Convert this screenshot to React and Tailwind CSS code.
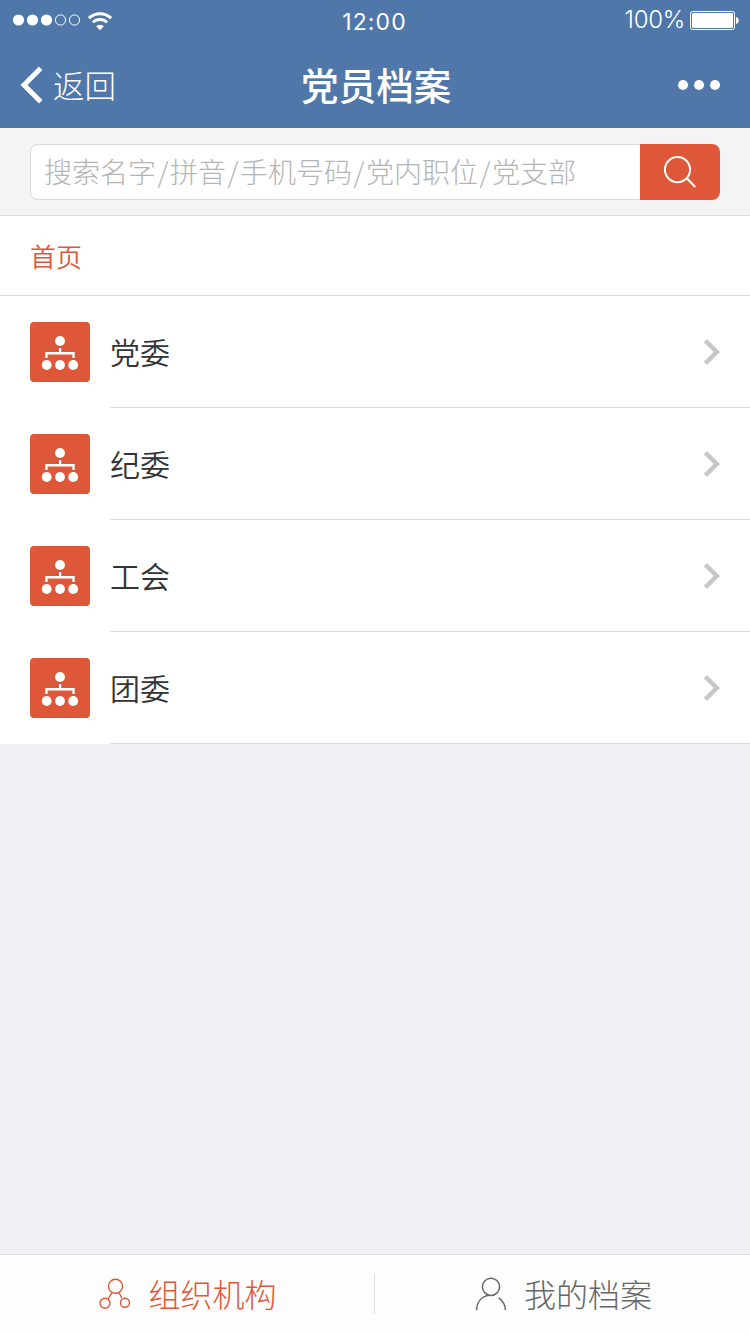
const CJK = "font-['Noto_Sans_CJK_SC',sans-serif]";

const departments = ['党委', '纪委', '工会', '团委'];
const searchFields = ['搜索名字', '拼音', '手机号码', '党内职位', '党支部'];

function StatusBar() {
  return (
    <div className="flex h-10 items-center justify-between pr-[11px] pl-3 font-['Inter','Liberation_Sans',sans-serif]">
      <div className="flex flex-1 items-center">
        <svg width="70" height="14" viewBox="0 0 70 14">
          <g fill="#fff">
            <circle cx="6.5" cy="7" r="5.6" />
            <circle cx="20.5" cy="7" r="5.6" />
            <circle cx="34.5" cy="7" r="5.6" />
          </g>
          <g fill="none" stroke="#fff" strokeWidth="1">
            <circle cx="48.5" cy="7" r="5.1" />
            <circle cx="62.5" cy="7" r="5.1" />
          </g>
        </svg>
        <svg width="26" height="20" viewBox="0 0 26 20" className="ml-[5px] mt-[1px]" fill="none" stroke="#fff">
          <path d="M1.9 7.2a16 16 0 0 1 22.2 0" strokeWidth="3" />
          <path d="M5.9 11.3a10.4 10.4 0 0 1 14.2 0" strokeWidth="2.8" />
          <path d="M13 19.2L9.1 15.3a5.6 5.6 0 0 1 7.8 0z" fill="#fff" stroke="none" />
        </svg>
      </div>
      <div className="mt-[3px] mr-[2px] text-[23px] leading-6 font-normal tracking-[1.1px]">12:00</div>
      <div className="flex flex-1 items-center justify-end">
        <span className="mr-[5px] text-[24px] leading-6 font-light tracking-[-0.3px]">100%</span>
        <svg width="49" height="20" viewBox="0 0 49 20">
          <rect x="0.5" y="1.5" width="44" height="18" rx="2" fill="none" stroke="#fff" />
          <rect x="2" y="3" width="41" height="15" rx="1" fill="#fff" />
          <path d="M46 7a3.6 3.6 0 0 1 0 7z" fill="#fff" />
        </svg>
      </div>
    </div>
  );
}

function NavBar() {
  return (
    <div className="flex h-[88px] items-center pr-[30px] pl-5">
      <div className="flex w-[280px] items-center">
        <svg width="24" height="38" viewBox="0 0 24 38" className="mt-[2px]" fill="none" stroke="#fff" strokeWidth="5">
          <path d="M20.7 2.3L4 19l16.7 16.7" />
        </svg>
        <span className="ml-[9px] text-[31.5px] leading-10 font-light">返回</span>
      </div>
      <h1 className="ml-[1px] text-[37.6px] leading-10 font-medium">党员档案</h1>
      <div className="flex flex-1 justify-end gap-[6px] pt-[2px]">
        <i className="size-[10px] rounded-full bg-white" />
        <i className="size-[10px] rounded-full bg-white" />
        <i className="size-[10px] rounded-full bg-white" />
      </div>
    </div>
  );
}

function SearchBar() {
  return (
    <div className="flex h-[88px] border-b border-[#dcdcdd] bg-[#f4f4f4] px-[30px] py-4">
      <div className="flex h-14 flex-1 items-center rounded-l-[8px] border border-r-0 border-[#dadbdd] bg-white pb-[2px] pl-[13px] text-[28px] leading-10 font-light whitespace-nowrap text-[#b5b5b6]">
        {searchFields.map((field, i) => (
          <span key={field} className="flex">
            {i > 0 && <span className="w-[14px] text-center">/</span>}
            {field}
          </span>
        ))}
      </div>
      <button className="flex h-14 w-20 items-center justify-center rounded-r-[8px] bg-[#de5738]">
        <svg width="34" height="34" viewBox="0 0 34 34" fill="none" stroke="#fff" strokeWidth="2">
          <circle cx="14.5" cy="14.6" r="12.6" />
          <path d="M23.6 23L32.2 32" />
        </svg>
      </button>
    </div>
  );
}

function OrgBadge() {
  return (
    <span className="flex size-[60px] items-center justify-center rounded-[4px] bg-[#de5738]">
      <svg width="60" height="60" viewBox="0 0 60 60" fill="#fff">
        <circle cx="30" cy="19" r="5" />
        <path d="M29 26h2.2v4h13.5v6h-2.3v-3.6H17.6V36h-2.3v-6H29z" />
        <circle cx="16.7" cy="43" r="4.9" />
        <circle cx="30" cy="43" r="4.9" />
        <circle cx="43.2" cy="43" r="4.9" />
      </svg>
    </span>
  );
}

function DepartmentRow({ name }) {
  return (
    <li className="flex h-28 items-center bg-white pl-[30px]">
      <OrgBadge />
      <div className="ml-5 flex h-full flex-1 items-center justify-between border-b border-[#dcdcdd] pr-[30px]">
        <span className="pb-[2px] text-[30px] leading-10 font-[350] text-[#333]">{name}</span>
        <svg width="18" height="28" viewBox="0 0 18 28" fill="none" stroke="#c7c8ca" strokeWidth="4.6">
          <path d="M3.4 2.6L14.8 14L3.4 25.4" />
        </svg>
      </div>
    </li>
  );
}

function TabBar() {
  return (
    <nav className="flex h-20 items-center border-t border-[#dcdcdd] bg-[#fdfdfd] pb-[2px] text-[32px] leading-10 font-light">
      <div className="flex w-[374px] items-center justify-center pl-[2px] text-[#de5738]">
        <svg width="32" height="32" viewBox="0 0 32 32" fill="none" stroke="currentColor" strokeWidth="1.4">
          <circle cx="16.5" cy="8.2" r="7" />
          <circle cx="6" cy="25.3" r="5" />
          <circle cx="26" cy="24.8" r="4.5" />
          <path d="M12.8 14.8L9.2 20.8M20 14.8L23 20" />
        </svg>
        <span className="ml-[17px] pb-[2px]">组织机构</span>
      </div>
      <div className="h-10 w-px bg-[#dcdcdd]" />
      <div className="flex flex-1 items-center justify-center pl-[2px] text-[#666]">
        <svg width="32" height="34" viewBox="0 0 32 34" fill="none" stroke="currentColor" strokeWidth="1.5">
          <circle cx="16" cy="9.8" r="8.6" />
          <path d="M13.6 18.3C6.6 19.8 1.6 25 1.6 33M23.7 20.8C28 24 30.4 28 30.4 33" />
        </svg>
        <span className="ml-[17px] pb-[2px]">我的档案</span>
      </div>
    </nav>
  );
}

export default function App() {
  return (
    <div className={`flex h-[1334px] w-[750px] flex-col overflow-hidden bg-[#efeff4] ${CJK}`}>
      <header className="h-32 bg-[#4f77aa] text-white">
        <StatusBar />
        <NavBar />
      </header>
      <SearchBar />
      <div className="flex h-20 items-center border-b border-[#dcdcdd] bg-white px-[30px] text-[26px] leading-10 font-[350] text-[#de5738]">
        首页
      </div>
      <ul className="flex-1">
        {departments.map((name) => (
          <DepartmentRow key={name} name={name} />
        ))}
      </ul>
      <TabBar />
    </div>
  );
}
